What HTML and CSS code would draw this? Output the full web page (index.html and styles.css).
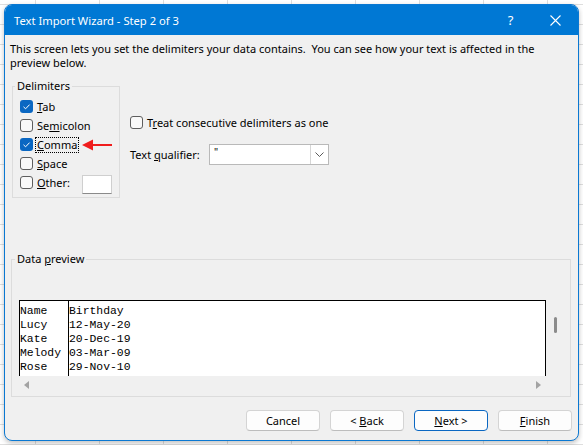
FILE: index.html
```html
<!DOCTYPE html>
<html>
<head>
<meta charset="utf-8">
<link rel="stylesheet" href="styles.css">
</head>
<body>
<div class="dialog">
  <div class="titlebar">
    <span class="title">Text Import Wizard - Step 2 of 3</span>
    <span class="help">?</span>
    <span class="close"><svg width="11" height="11" viewBox="0 0 11 11"><path d="M0.5 0.5L10.5 10.5M10.5 0.5L0.5 10.5" stroke="#fff" stroke-width="1.1" fill="none"/></svg></span>
  </div>
  <div class="content">
    <p class="intro">This screen lets you set the delimiters your data contains.&nbsp; You can see how your text is affected in the<br>preview below.</p>
    <div class="options">
      <fieldset class="group delims">
        <legend>Delimiters</legend>
        <div class="rows">
          <div class="row"><span class="cb on"><svg width="13" height="13" viewBox="0 0 13 13"><path d="M3.5 6.8L5.6 8.8L9.6 4.6" stroke="#fff" stroke-width="1" fill="none"/></svg></span><span class="lbl"><u>T</u>ab</span></div>
          <div class="row"><span class="cb"></span><span class="lbl">Se<u>m</u>icolon</span></div>
          <div class="row"><span class="cb on"><svg width="13" height="13" viewBox="0 0 13 13"><path d="M3.5 6.8L5.6 8.8L9.6 4.6" stroke="#fff" stroke-width="1" fill="none"/></svg></span><span class="lbl focus"><u>C</u>omma</span><svg class="arrow" width="31" height="12" viewBox="0 0 31 12"><path d="M10 5H30V7H10Z" fill="#f01c1c"/><path d="M0 6L11 0.5V11.5Z" fill="#f01c1c"/></svg></div>
          <div class="row"><span class="cb"></span><span class="lbl"><u>S</u>pace</span></div>
          <div class="row"><span class="cb"></span><span class="lbl other"><u>O</u>ther:</span><span class="textbox"></span></div>
        </div>
      </fieldset>
      <div class="right">
        <div class="row"><span class="cb"></span><span class="lbl">T<u>r</u>eat consecutive delimiters as one</span></div>
        <div class="qual">
          <span class="qlbl">Text <u>q</u>ualifier:</span>
          <div class="combo"><span class="val">"</span><span class="drop"><svg width="9" height="5" viewBox="0 0 9 5"><path d="M0.5 0.5L4.5 4.5L8.5 0.5" stroke="#5a5a5a" stroke-width="1" fill="none"/></svg></span></div>
        </div>
      </div>
    </div>
    <fieldset class="group preview">
      <legend>Data <u>p</u>review</legend>
      <div class="pv">
        <div class="pv-main">
          <div class="sheet">
            <div class="col c1">Name<br>Lucy<br>Kate<br>Melody<br>Rose</div>
            <div class="col c2">Birthday<br>12-May-20<br>20-Dec-19<br>03-Mar-09<br>29-Nov-10</div>
          </div>
          <div class="vscroll"><span class="thumb"></span></div>
        </div>
        <div class="hscroll">
          <svg width="5" height="8" viewBox="0 0 5 8"><path d="M5 0V8L0 4Z" fill="#a3a3a3"/></svg>
          <svg width="5" height="8" viewBox="0 0 5 8"><path d="M0 0V8L5 4Z" fill="#a3a3a3"/></svg>
        </div>
      </div>
    </fieldset>
    <div class="buttons">
      <button class="btn">Cancel</button>
      <button class="btn">&lt; <u>B</u>ack</button>
      <button class="btn default"><u>N</u>ext &gt;</button>
      <button class="btn"><u>F</u>inish</button>
    </div>
  </div>
</div>
</body>
</html>
```

FILE: styles.css
```css
html, body {
  margin: 0;
  padding: 0;
  width: 583px;
  height: 445px;
  overflow: hidden;
}
body {
  background-color: #ffffff;
  background-image:
    linear-gradient(to right, #dedede 1px, transparent 1px),
    linear-gradient(to bottom, #dedede 1px, transparent 1px);
  background-size: 64px 100%, 100% 20px;
  background-position: 35px 0, 0 4px;
  font-family: "Noto Sans", "DejaVu Sans", sans-serif;
  font-size: 11px;
  color: #000;
}
.dialog {
  box-sizing: border-box;
  margin: 4px 0 0 4px;
  width: 575px;
  height: 437px;
  border: 1px solid #0a78d2;
  border-radius: 8px;
  background: #f0f0f0;
  overflow: hidden;
  display: flex;
  flex-direction: column;
  box-shadow: 0 2px 5px rgba(0,0,0,0.25);
}
.titlebar {
  height: 30px;
  flex: none;
  background: #0078d4;
  color: #fff;
  display: flex;
  align-items: center;
  padding-left: 9px;
}
.title {
  flex: 1;
  font-size: 11.2px;
}
.help {
  width: 45px;
  text-align: center;
  font-size: 13px;
}
.close {
  width: 45px;
  display: flex;
  justify-content: center;
  align-items: center;
}
.content {
  flex: 1;
  padding-left: 5px;
}
.intro {
  margin: 0;
  padding: 7px 0 0 0;
  line-height: 14px;
}
.options {
  display: flex;
  margin-top: 9px;
  padding-left: 2px;
}
.group {
  margin: 0;
  padding: 0;
  border: 1px solid #dcdcdc;
  min-width: 0;
  box-sizing: border-box;
}
.group legend {
  padding: 0 2px;
  margin-left: 2px;
  line-height: 14px;
}
.delims {
  width: 108px;
}
.rows {
  padding: 4px 0 5px 7px;
}
.row {
  display: flex;
  align-items: center;
  height: 19px;
}
.cb {
  box-sizing: border-box;
  width: 13px;
  height: 13px;
  border: 1px solid #5e5e5e;
  border-radius: 3px;
  background: #f9f9f9;
  flex: none;
  display: block;
}
.cb.on {
  border: none;
  background: #0a67c2;
}
.cb svg {
  display: block;
}
.lbl {
  margin-left: 4px;
  line-height: 14px;
  white-space: nowrap;
}
.lbl.focus {
  margin-left: 2px;
  padding: 0 1px;
  border: 1px dotted #000;
}
.arrow {
  margin-left: 3px;
  flex: none;
}
.lbl.other {
  width: 45px;
}
.textbox {
  box-sizing: border-box;
  width: 30px;
  height: 19px;
  margin-top: 3px;
  background: #fff;
  border: 1px solid #cfcfcf;
  border-bottom-color: #8a8a8a;
}
.right {
  margin-left: 10px;
  padding-top: 34px;
}
.qual {
  display: flex;
  align-items: center;
  margin-top: 12px;
}
.qlbl {
  width: 79px;
  white-space: nowrap;
}
.combo {
  box-sizing: border-box;
  width: 120px;
  height: 21px;
  background: #fff;
  border: 1px solid #b9b9b9;
  display: flex;
}
.combo .val {
  flex: 1;
  padding-left: 4px;
  line-height: 14px;
  font-size: 10px;
}
.combo .drop {
  width: 17px;
  border-left: 1px solid #d6d6d6;
  display: flex;
  align-items: center;
  justify-content: center;
}
.preview {
  width: 560px;
  margin: 54px 0 0 1px;
}
.preview legend {
  margin-left: 3px;
}
.pv {
  padding: 34px 0 2px 7px;
}
.pv-main {
  display: flex;
}
.sheet {
  box-sizing: border-box;
  width: 527px;
  height: 76px;
  background: #fff;
  border: 1px solid #000;
  border-bottom: none;
  display: flex;
  font-family: "Liberation Mono", "Courier New", monospace;
  font-size: 11.4px;
  line-height: 14px;
  color: #000;
}
.col {
  padding-top: 3px;
  white-space: nowrap;
}
.c1 {
  width: 48px;
  border-right: 1px solid #000;
}
.c2 {
  flex: 1;
}
.vscroll {
  flex: 1;
  padding: 17px 0 0 8px;
}
.thumb {
  display: block;
  width: 3px;
  height: 16px;
  border-radius: 2px;
  background: #8b8b8b;
}
.hscroll {
  height: 18px;
  display: flex;
  align-items: center;
  justify-content: space-between;
  padding: 0 29px 0 5px;
}
.hscroll svg {
  display: block;
}
.buttons {
  display: flex;
  justify-content: flex-end;
  gap: 10px;
  margin-top: 13px;
  padding-right: 6px;
}
.btn {
  box-sizing: border-box;
  width: 74px;
  height: 21px;
  padding: 0;
  font-family: "Noto Sans", "DejaVu Sans", sans-serif;
  font-size: 11px;
  color: #000;
  background: #fdfdfd;
  border: 1px solid #d4d4d4;
  border-bottom-color: #bdbdbd;
  border-radius: 4px;
  line-height: 18px;
}
.btn.default {
  border: 1px solid #0a67c2;
}
```
